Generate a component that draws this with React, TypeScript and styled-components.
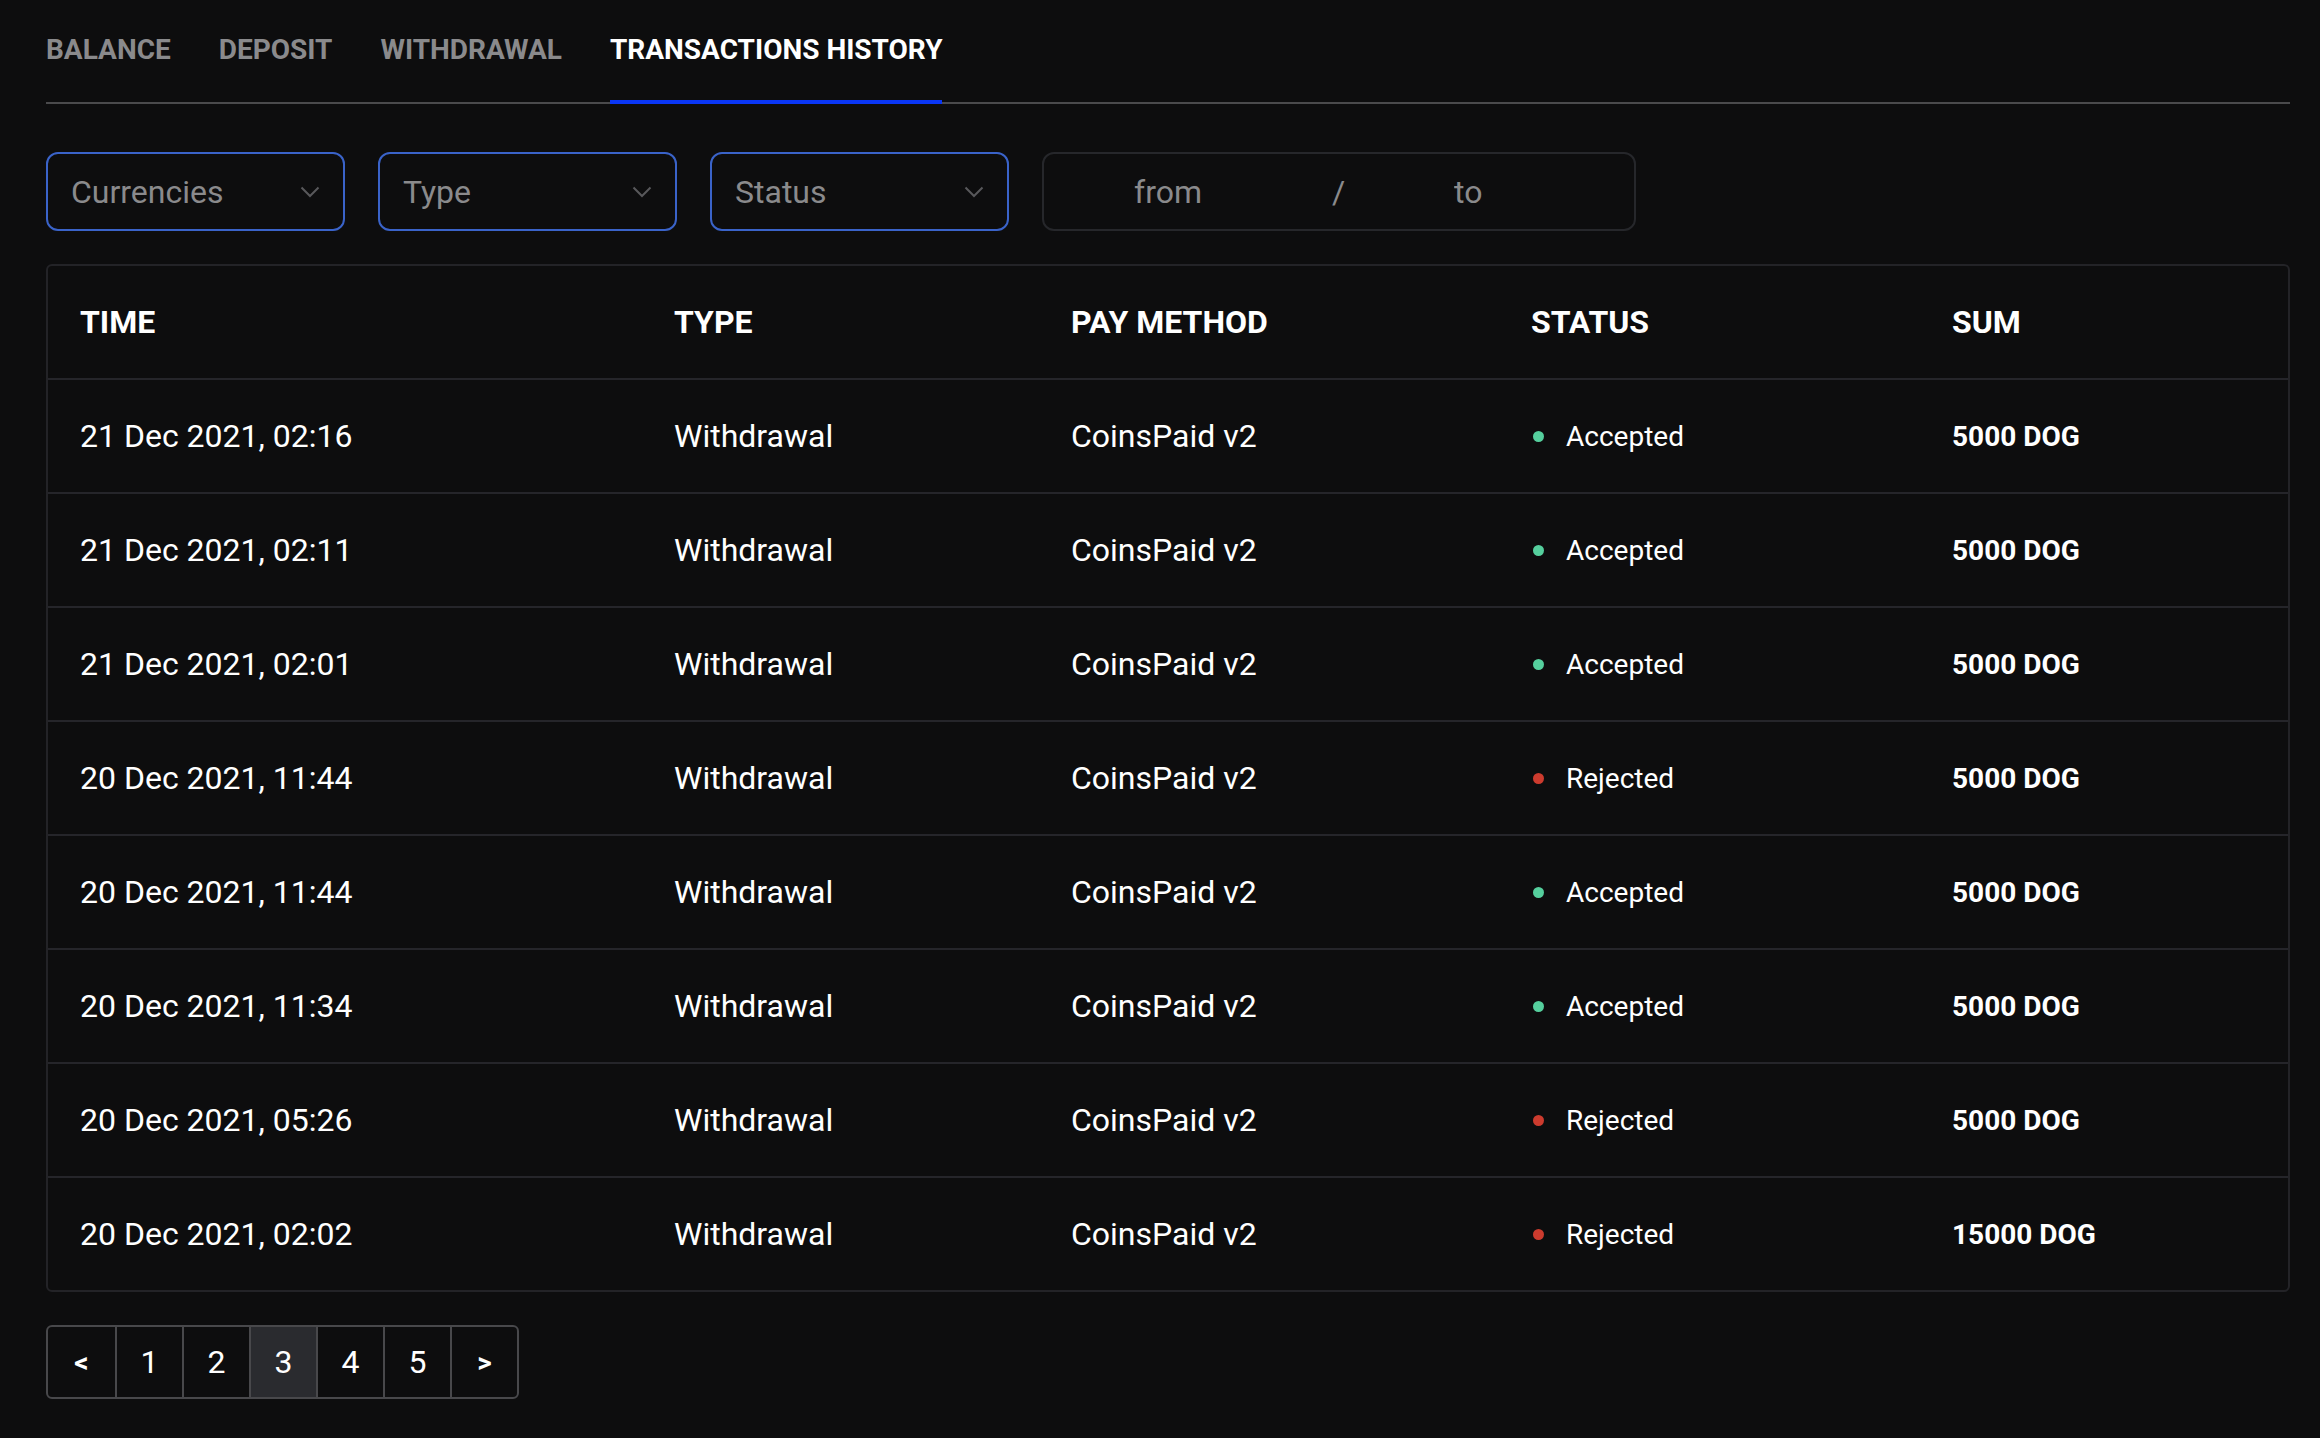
import styled, { createGlobalStyle } from "styled-components";

const GlobalStyle = createGlobalStyle`
  * {
    box-sizing: border-box;
  }

  body {
    margin: 0;
    background: #0d0d0e;
    color: #ffffff;
    font-family: Roboto, "Liberation Sans", Arial, sans-serif;
  }
`;

const Page = styled.div`
  min-height: 1438px;
  padding: 0 30px 40px 46px;
`;

const Tabs = styled.nav`
  display: flex;
  gap: 48px;
  padding-top: 33px;
  border-bottom: 2px solid #4a4a4c;
`;

const Tab = styled.div<{ $active?: boolean }>`
  position: relative;
  font-size: 28px;
  line-height: 33px;
  font-weight: 700;
  padding-bottom: 36px;
  color: ${(p) => (p.$active ? "#ffffff" : "#8a8a8c")};

  &::after {
    content: "";
    display: ${(p) => (p.$active ? "block" : "none")};
    position: absolute;
    left: 0;
    right: 0;
    bottom: -2px;
    height: 4px;
    background: #0a36f5;
  }
`;

const Filters = styled.div`
  display: flex;
  gap: 33px;
  margin-top: 48px;
`;

const Select = styled.div`
  width: 299px;
  height: 79px;
  display: flex;
  align-items: center;
  justify-content: space-between;
  padding: 0 23px 0 23px;
  border: 2px solid #3a63c9;
  border-radius: 12px;
  font-size: 32px;
  color: #8a8a8c;
`;

const DateRange = styled.div`
  width: 594px;
  height: 79px;
  display: flex;
  align-items: center;
  padding-left: 90px;
  border: 2px solid #26272b;
  border-radius: 12px;
`;

const DateInput = styled.input<{ $w: number }>`
  width: ${(p) => p.$w}px;
  background: transparent;
  border: none;
  outline: none;
  padding: 0;
  font-family: inherit;
  font-size: 32px;
  color: #ffffff;

  &::placeholder {
    color: #8a8a8c;
  }
`;

const Slash = styled.span`
  width: 124px;
  font-size: 32px;
  color: #8a8a8c;
`;

const Table = styled.div`
  margin-top: 33px;
  border: 2px solid #232327;
  border-radius: 6px;
`;

const Row = styled.div<{ $head?: boolean }>`
  display: grid;
  grid-template-columns: 594px 397px 460px 421px 1fr;
  align-items: center;
  height: 114px;
  padding-left: 32px;
  border-bottom: 2px solid #25252a;
  font-size: 32px;
  font-weight: ${(p) => (p.$head ? 700 : 400)};

  &:last-child {
    height: 112px;
    border-bottom: none;
  }
`;

const Status = styled.div<{ $ok: boolean }>`
  display: flex;
  align-items: center;
  font-size: 28px;

  &::before {
    content: "";
    width: 11px;
    height: 11px;
    margin: 0 22px 0 2px;
    border-radius: 50%;
    background: ${(p) => (p.$ok ? "#55cf9d" : "#cc3b2e")};
  }
`;

const Sum = styled.div`
  font-size: 28px;
  font-weight: 700;
`;

const Pager = styled.div`
  display: inline-flex;
  margin-top: 33px;
  border: 2px solid #48484b;
  border-radius: 6px;
  overflow: hidden;
`;

const PageCell = styled.div<{ $active?: boolean; $arrow?: boolean }>`
  width: 67px;
  height: 70px;
  display: flex;
  align-items: center;
  justify-content: center;
  font-size: ${(p) => (p.$arrow ? "28px" : "32px")};
  font-weight: ${(p) => (p.$arrow ? 700 : 400)};
  background: ${(p) => (p.$active ? "#2a2b2f" : "transparent")};

  & + & {
    border-left: 2px solid #48484b;
  }
`;

const Chevron = () => (
  <svg width="20" height="12" viewBox="0 0 20 12" fill="none">
    <polyline points="1.5,1.5 10,10 18.5,1.5" stroke="#58585b" strokeWidth="2" />
  </svg>
);

const rows: [string, boolean, string][] = [
  ["21 Dec 2021, 02:16", true, "5000 DOG"],
  ["21 Dec 2021, 02:11", true, "5000 DOG"],
  ["21 Dec 2021, 02:01", true, "5000 DOG"],
  ["20 Dec 2021, 11:44", false, "5000 DOG"],
  ["20 Dec 2021, 11:44", true, "5000 DOG"],
  ["20 Dec 2021, 11:34", true, "5000 DOG"],
  ["20 Dec 2021, 05:26", false, "5000 DOG"],
  ["20 Dec 2021, 02:02", false, "15000 DOG"],
];

export default function App() {
  return (
    <>
      <GlobalStyle />
      <Page>
        <Tabs>
          <Tab>BALANCE</Tab>
          <Tab>DEPOSIT</Tab>
          <Tab>WITHDRAWAL</Tab>
          <Tab $active>TRANSACTIONS HISTORY</Tab>
        </Tabs>

        <Filters>
          {["Currencies", "Type", "Status"].map((label) => (
            <Select key={label}>
              {label}
              <Chevron />
            </Select>
          ))}
          <DateRange>
            <DateInput $w={198} placeholder="from" />
            <Slash>/</Slash>
            <DateInput $w={180} placeholder="to" />
          </DateRange>
        </Filters>

        <Table>
          <Row $head>
            <div>TIME</div>
            <div>TYPE</div>
            <div>PAY METHOD</div>
            <div>STATUS</div>
            <div>SUM</div>
          </Row>
          {rows.map(([time, ok, sum], i) => (
            <Row key={i}>
              <div>{time}</div>
              <div>Withdrawal</div>
              <div>CoinsPaid v2</div>
              <Status $ok={ok}>{ok ? "Accepted" : "Rejected"}</Status>
              <Sum>{sum}</Sum>
            </Row>
          ))}
        </Table>

        <Pager>
          <PageCell $arrow>&lt;</PageCell>
          {[1, 2, 3, 4, 5].map((n) => (
            <PageCell key={n} $active={n === 3}>
              {n}
            </PageCell>
          ))}
          <PageCell $arrow>&gt;</PageCell>
        </Pager>
      </Page>
    </>
  );
}
